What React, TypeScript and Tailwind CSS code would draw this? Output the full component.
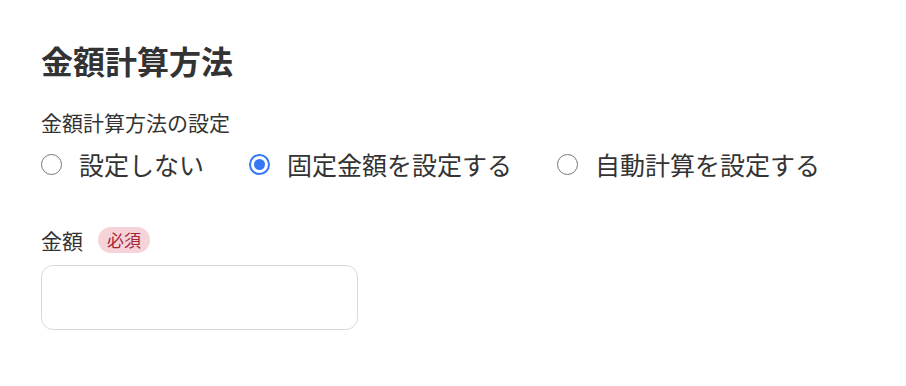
const font = { fontFamily: '"Noto Sans CJK JP", "Noto Sans", sans-serif' };

function Radio({ label, checked }: { label: string; checked?: boolean }) {
    return (
        <label className="flex items-center">
            {checked ? (
                <span className="flex h-[21px] w-[21px] items-center justify-center rounded-full border-[2px] border-[#3478f6]">
                    <span className="h-[11px] w-[11px] rounded-full bg-[#3478f6]" />
                </span>
            ) : (
                <span className="h-[21px] w-[21px] rounded-full border-[1.5px] border-[#767676]" />
            )}
            <span className="ml-[17px] text-[25px] leading-[34px] text-[#333]">{label}</span>
        </label>
    );
}

export default function App() {
    return (
        <div className="h-[386px] w-[906px] bg-white pl-[41px] pt-[36px] text-[#333]" style={font}>
            <h1 className="text-[32px] font-bold leading-[48px]">金額計算方法</h1>
            <div className="mt-[23px] text-[21px] leading-[30px]">金額計算方法の設定</div>
            <div className="mt-[10px] flex items-center gap-[45px]">
                <Radio label="設定しない" />
                <Radio label="固定金額を設定する" checked />
                <Radio label="自動計算を設定する" />
            </div>
            <div className="mt-[44px] flex items-center">
                <span className="text-[21px] leading-[30px]">金額</span>
                <span className="ml-[15px] rounded-full bg-[#f6d3d8] px-[9px] text-[17px] leading-[26px] text-[#a3263a]">
                    必須
                </span>
            </div>
            <input
                type="text"
                className="mt-[10px] block h-[65px] w-[317px] rounded-[12px] border border-[#d9d9d9] bg-white px-3 outline-none"
            />
        </div>
    );
}
